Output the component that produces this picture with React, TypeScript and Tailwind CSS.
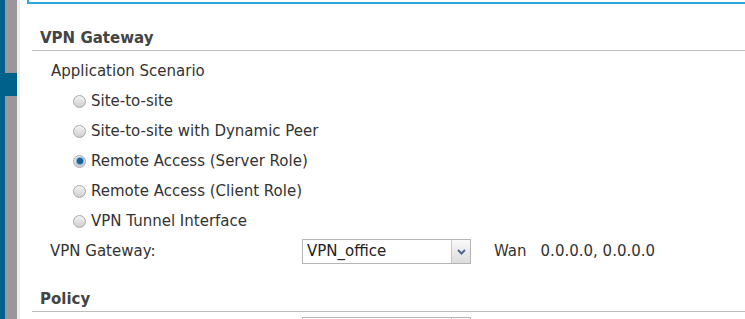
import React from 'react';

const scenarios = [
  { label: 'Site-to-site', checked: false },
  { label: 'Site-to-site with Dynamic Peer', checked: false },
  { label: 'Remote Access (Server Role)', checked: true },
  { label: 'Remote Access (Client Role)', checked: false },
  { label: 'VPN Tunnel Interface', checked: false },
];

function Radio({ checked }: { checked: boolean }) {
  return (
    <span className="w-[13px] h-[13px] rounded-full border border-[#a9a9a9] bg-gradient-to-b from-[#f4f4f4] to-[#cfcfcf] flex items-center justify-center shrink-0">
      {checked && <span className="w-[6px] h-[6px] rounded-full bg-[#1d5f95] shadow-[0_0_1px_1px_#6aa6d6]" />}
    </span>
  );
}

function Select({ value }: { value: string }) {
  return (
    <div className="w-[169px] h-[25px] border border-[#b5b5b5] flex bg-white">
      <div className="flex-1 px-[4px] leading-[22px] text-[15px] text-[#222]">{value}</div>
      <div className="w-[19px] border-l border-[#c8c8c8] bg-gradient-to-b from-[#fafafa] to-[#dcdcdc] flex items-center justify-center">
        <svg width="9" height="6" viewBox="0 0 9 6">
          <path d="M1 1 L4.5 4.5 L8 1" stroke="#4a6a90" strokeWidth="2" fill="none" />
        </svg>
      </div>
    </div>
  );
}

export default function App() {
  return (
    <div className="w-[745px] h-[319px] flex overflow-hidden bg-white" style={{ fontFamily: '"DejaVu Sans", Verdana, sans-serif' }}>
      <div className="w-[20px] flex shrink-0">
        <div className="w-[5px] bg-[#00628a]" />
        <div className="w-[12px] flex flex-col">
          <div className="h-[73px] bg-[#9b9699]" />
          <div className="h-[23px] bg-[#00628a]" />
          <div className="flex-1 bg-[#9b9699]" />
        </div>
        <div className="w-[3px] bg-[#eeeef2]" />
      </div>
      <div className="flex-1 flex flex-col">
        <div className="h-[4px] ml-[7px] border-l-2 border-b-2 border-[#2aa8dc] shrink-0" />
        <div className="ml-[12px] mt-[25px]">
          <div className="pl-[8px] pb-[3px] leading-[18px] text-[15px] font-bold text-[#444] border-b border-[#bdbdbd]">VPN Gateway</div>
          <div className="pl-[19px] pt-[9px] text-[15px] text-[#333]">
            <div className="h-[22px] leading-[22px]">Application Scenario</div>
            <div className="pl-[22px] pt-[4px] flex flex-col">
              {scenarios.map((s) => (
                <div key={s.label} className="h-[30px] flex items-center gap-[5px]">
                  <Radio checked={s.checked} />
                  <span>{s.label}</span>
                </div>
              ))}
            </div>
            <div className="flex items-center h-[27px] mt-[2px]">
              <div className="w-[252px] -ml-[1px]">VPN Gateway:</div>
              <Select value="VPN_office" />
              <span className="ml-[23px]">Wan</span>
              <span className="ml-[14px]">0.0.0.0, 0.0.0.0</span>
            </div>
          </div>
          <div className="mt-[25px] pl-[8px] pb-[3px] leading-[18px] text-[15px] font-bold text-[#444] border-b border-[#bdbdbd]">Policy</div>
          <div className="pl-[270px] pt-[5px]">
            <Select value="" />
          </div>
        </div>
      </div>
    </div>
  );
}
